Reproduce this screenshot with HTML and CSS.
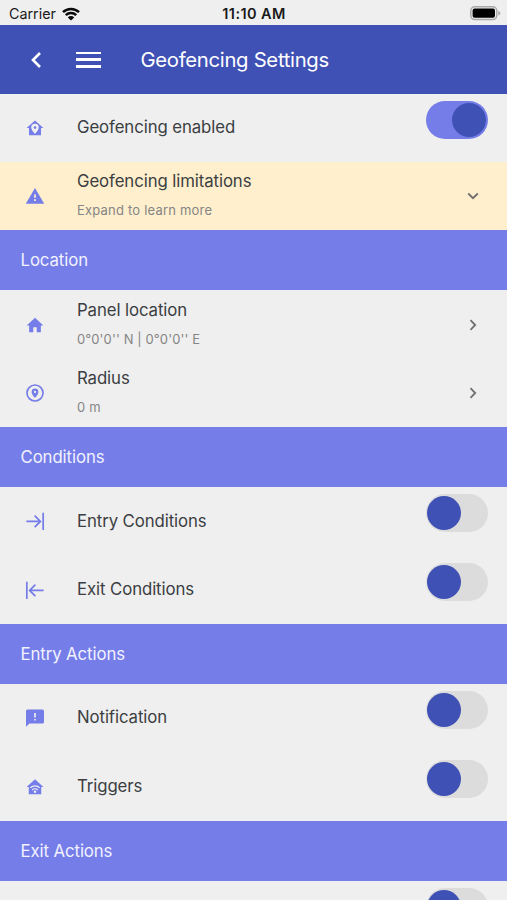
FILE: index.html
```
<!DOCTYPE html>
<html lang="en">

<head>
  <meta charset="utf-8">
  <title>Geofencing Settings</title>
  <link rel="stylesheet" href="styles.css">
</head>

<body>
  <div class="status-bar">
    <div class="carrier">
      <span>Carrier</span>
      <svg class="wifi" viewBox="0 0 18 14">
        <path d="M1 5.2a11.4 11.4 0 0 1 16 0M3.8 8.1a7.4 7.4 0 0 1 10.4 0" fill="none" stroke="#0b0b0b" stroke-width="2.5"/>
        <path d="M9 13.6L5.8 10.4a4.6 4.6 0 0 1 6.4 0z" fill="#0b0b0b"/>
      </svg>
    </div>
    <div class="clock">11:10 AM</div>
    <svg class="battery" viewBox="0 0 31 15">
      <rect x="0.8" y="0.8" width="26" height="12.8" rx="4" fill="#efefef" stroke="#a9a9a9" stroke-width="1.5"/>
      <rect x="2.6" y="2.6" width="22.4" height="9.2" rx="2" fill="#000"/>
      <path d="M28.3 4.8q2 .7 2 2.4t-2 2.4z" fill="#a9a9a9"/>
    </svg>
  </div>

  <header class="header">
    <svg class="back" viewBox="0 0 12 18"><path d="M10 2L3 9l7 7" fill="none" stroke="#fff" stroke-width="2.6"/></svg>
    <div class="menu"><i></i><i></i><i></i></div>
    <h1>Geofencing Settings</h1>
  </header>

  <div class="row">
    <svg class="icon" viewBox="0 0 24 24"><path fill-rule="evenodd" d="M12 2L.8 12H4v9.800h16V12h3.200zM12 6.400a5 5 0 0 0-5 5c0 3.500 5 8.400 5 8.400s5-4.900 5-8.400a5 5 0 0 0-5-5zm0 3.200a1.800 1.800 0 1 1 0 3.600 1.800 1.800 0 0 1 0-3.600z"/></svg>
    <div class="label"><p class="name">Geofencing enabled</p></div>
    <div class="toggle on"></div>
  </div>
  <div class="row warning">
    <svg class="icon" viewBox="0 0 24 24"><path d="M-.3 22.300h24.600L12 1.200zm13.500-3.700h-2.400v-2.200h2.400zm0-4.200h-2.400v-4.300h2.400z"/></svg>
    <div class="label">
      <p class="name">Geofencing limitations</p>
      <p class="detail">Expand to learn more</p>
    </div>
    <svg class="chevron" viewBox="0 0 14 14"><path d="M2.2 4.500L7 9.200l4.800-4.700"/></svg>
  </div>

  <h2>Location</h2>
  <div class="row">
    <svg class="icon" viewBox="0 0 24 24"><path d="M9.700 21.500V15h4.600v6.500h5.500v-9h3.300L12 2.300.9 12.500h3.300v9z"/></svg>
    <div class="label">
      <p class="name">Panel location</p>
      <p class="detail coords">0°0'0'' N | 0°0'0'' E</p>
    </div>
    <svg class="chevron" viewBox="0 0 14 14"><path d="M4.500 2.200L9.200 7l-4.700 4.800"/></svg>
  </div>
  <div class="row">
    <svg class="icon" viewBox="0 0 24 24">
      <circle cx="12" cy="12" r="10.700" fill="none" stroke="#757de8" stroke-width="2.200"/>
      <path fill-rule="evenodd" d="M12 6a4.500 4.500 0 0 0-4.500 4.500c0 3.300 4.500 7.900 4.500 7.900s4.500-4.600 4.500-7.900A4.500 4.500 0 0 0 12 6zm0 3a1.500 1.500 0 1 1 0 3 1.500 1.500 0 0 1 0-3z"/>
    </svg>
    <div class="label">
      <p class="name">Radius</p>
      <p class="detail">0 m</p>
    </div>
    <svg class="chevron" viewBox="0 0 14 14"><path d="M4.500 2.200L9.200 7l-4.700 4.800"/></svg>
  </div>

  <h2>Conditions</h2>
  <div class="row">
    <svg class="icon line" viewBox="0 0 24 24"><path d="M.5 12.500h19M11.500 4.800l7.700 7.700-7.700 7.700M22.900 1v23"/></svg>
    <div class="label"><p class="name">Entry Conditions</p></div>
    <div class="toggle"></div>
  </div>
  <div class="row">
    <svg class="icon line" viewBox="0 0 24 24"><path d="M23.500 12.500h-19M12.500 4.800l-7.700 7.700 7.700 7.700M1.100 1v23"/></svg>
    <div class="label"><p class="name">Exit Conditions</p></div>
    <div class="toggle"></div>
  </div>

  <h2>Entry Actions</h2>
  <div class="row">
    <svg class="icon" viewBox="0 0 24 24"><path d="M22 .8H2A2 2 0 0 0 0 2.800V23.500l4.700-4.300H22a2 2 0 0 0 2-2V2.800a2 2 0 0 0-2-2zM13.100 15.400h-2.200v-2h2.200zm0-4h-2.200v-6h2.200z"/></svg>
    <div class="label"><p class="name">Notification</p></div>
    <div class="toggle"></div>
  </div>
  <div class="row">
    <svg class="icon" viewBox="0 0 24 24">
      <path d="M12 1.800L.8 12H3.700v9.700h16.600V12h2.900z"/>
      <path d="M5.800 13a8.800 8.800 0 0 1 12.400 0M8.300 16a5.300 5.300 0 0 1 7.400 0" fill="none" stroke="#efefef" stroke-width="1.500"/>
      <circle cx="12" cy="18.400" r="1.700" fill="#efefef"/>
    </svg>
    <div class="label"><p class="name">Triggers</p></div>
    <div class="toggle"></div>
  </div>

  <h2>Exit Actions</h2>
  <div class="row cut">
    <div class="label"></div>
    <div class="toggle"></div>
  </div>
</body>

</html>
```
FILE: styles.css
```
* {
  box-sizing: border-box;
}

body {
  margin: 0;
  height: 900px;
  overflow: hidden;
  background-color: #efefef;
  color: #3b3e42;
  font-family: Inter, "Liberation Sans", sans-serif;
}

h1,
h2,
p {
  margin: 0;
  font-weight: 400;
  white-space: nowrap;
}

.status-bar {
  display: grid;
  grid-template-columns: 1fr auto 1fr;
  align-items: center;
  height: 25.4px;
  padding: 2px 6px 0 9px;
  color: #1a1a1a;
  font-size: 14.3px;
}

.carrier {
  display: flex;
  align-items: center;
  gap: 6px;
}

.wifi {
  width: 18px;
  height: 14px;
}

.clock {
  padding-right: 2px;
  font-size: 14.5px;
  font-weight: 600;
  letter-spacing: 0.4px;
}

.battery {
  width: 31px;
  height: 15px;
  justify-self: end;
}

.header {
  display: flex;
  align-items: center;
  height: 68.3px;
  padding-left: 30px;
  background-color: #3f51b5;
  color: #fff;
}

.back {
  width: 12px;
  height: 18px;
}

.menu {
  display: flex;
  flex-direction: column;
  gap: 4px;
  width: 25px;
  margin: 0 40px 0 33.5px;
}

.menu i {
  height: 2.7px;
  background-color: #fff;
}

h1 {
  padding-bottom: 1px;
  font-size: 20.3px;
  letter-spacing: -0.3px;
}

h2 {
  height: 60px;
  padding-left: 20.5px;
  background-color: #757de8;
  color: #f1f2ff;
  font-size: 16.8px;
  letter-spacing: -0.1px;
  line-height: 61px;
}

.row {
  display: flex;
  height: 68.4px;
  padding: 0 19.5px 0 26px;
}

.cut {
  height: 19px;
  overflow: hidden;
}

.warning {
  background-color: #ffefcc;
}

.icon {
  width: 18px;
  height: 18px;
  margin-right: 33px;
  align-self: center;
  overflow: visible;
  fill: #757de8;
}

.line {
  fill: none;
  stroke: #757de8;
  stroke-width: 2.3;
}

.label {
  display: flex;
  flex: 1;
  flex-direction: column;
  justify-content: center;
  padding-bottom: 1.6px;
}

.name {
  font-size: 16.8px;
  letter-spacing: -0.1px;
  line-height: 30px;
}

.detail {
  color: #858585;
  font-size: 13px;
  letter-spacing: 0.2px;
  line-height: 28px;
}

.coords {
  letter-spacing: 0.1px;
}

.chevron {
  width: 14px;
  height: 14px;
  margin-right: 8px;
  align-self: center;
  fill: none;
  stroke: #707070;
  stroke-width: 1.8;
}

.toggle {
  flex-shrink: 0;
  width: 62px;
  height: 38px;
  margin-top: 7.2px;
  padding: 2px 1.5px;
  border-radius: 19px;
  background-color: #dcdcdc;
}

.toggle::before {
  content: "";
  display: block;
  width: 34px;
  height: 34px;
  border-radius: 50%;
  background-color: #3f51b5;
}

.on {
  background-color: #757de8;
}

.on::before {
  margin-left: auto;
}
```
